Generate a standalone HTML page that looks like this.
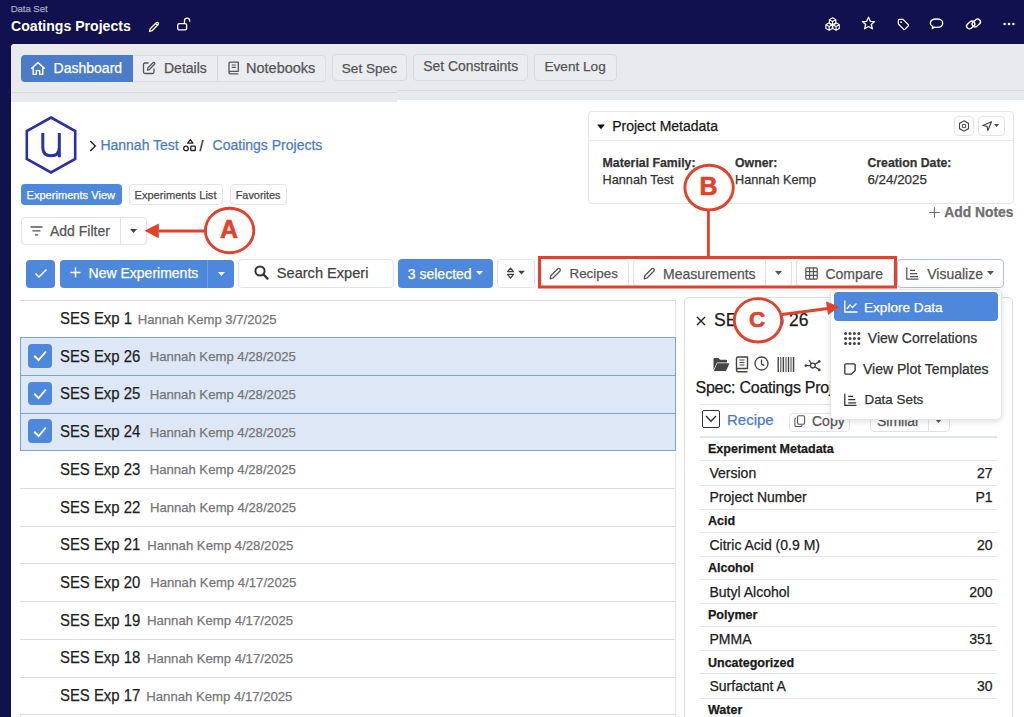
<!DOCTYPE html>
<html><head><meta charset="utf-8">
<style>
*{box-sizing:border-box;}
html,body{margin:0;padding:0;}
body{width:1024px;height:717px;overflow:hidden;position:relative;background:#11114f;font-family:"Liberation Sans",sans-serif;color:#222;-webkit-text-stroke-width:0.25px;}
.a{position:absolute;}
.t{position:absolute;white-space:nowrap;line-height:1;}
svg{position:absolute;overflow:visible;}
.btn{position:absolute;border:1px solid #e2e3e6;border-radius:4px;background:#fff;}
.gbtn{position:absolute;border:1px solid #d9dadf;border-radius:4px;background:#eaebee;}
.row{position:absolute;left:20px;width:655px;height:38px;border-top:1px solid #dcdcdc;background:#fff;}
.row.sel{background:#dee7f6;border-top:1px solid #79a3e4;}
.cb{position:absolute;left:8px;top:5.8px;width:23.6px;height:23.8px;background:#4d88dd;border-radius:4px;}
.ttl{position:absolute;left:40px;top:10.6px;font-size:16px;transform:scaleX(0.93);transform-origin:0 0;color:#1f1f1f;white-space:nowrap;line-height:1;}
.meta{position:absolute;top:12.1px;font-size:13.15px;color:#767679;white-space:nowrap;line-height:1;}
.tr{position:absolute;left:700px;width:297px;border-top:1px solid #e3e3e3;}
.th{font-weight:bold;font-size:12.5px;color:#1a1a1a;}
.td{font-size:14px;color:#222;}
</style></head><body>

<!-- HEADER -->
<div class="t" style="left:10.7px;top:4.1px;font-size:9.6px;letter-spacing:-0.05px;color:#a3a4c2;">Data Set</div>
<div class="t" style="left:11px;top:18.8px;font-size:14.1px;font-weight:bold;color:#fff;-webkit-text-stroke-width:0;">Coatings Projects</div>

<!-- main panel -->
<div class="a" style="left:11px;top:44px;width:1013px;height:673px;background:#fff;border-top-left-radius:4px;"></div>
<div class="a" style="left:11px;top:44px;width:1013px;height:56px;background:#e9eaee;border-top-left-radius:4px;"></div>
<div class="a" style="left:11px;top:44px;width:386px;height:58px;background:#e9eaee;border-top-left-radius:4px;"></div>
<div class="a" style="left:397px;top:90px;width:627px;height:1px;background:#d9dae0;"></div>
<div class="a" style="left:11px;top:92px;width:386px;height:1px;background:#d9dae0;"></div>


<!-- header icons -->
<svg style="left:148px;top:21px" width="12" height="12" viewBox="0 0 12 12"><path d="M1.5 10.5 L2.2 7.8 L8.3 1.7 Q9.2 0.9 10.1 1.8 Q10.9 2.7 10.2 3.5 L4.1 9.7 Z M7.5 2.6 L9.3 4.4" fill="none" stroke="#fff" stroke-width="1.3" stroke-linejoin="round"/></svg>
<svg style="left:177.3px;top:16.8px" width="14" height="14" viewBox="0 0 15 15"><rect x="0.8" y="7" width="9.5" height="6.8" rx="1.6" fill="none" stroke="#fff" stroke-width="1.4"/><path d="M8 7 V4.2 Q8 1.2 10.8 1.2 Q13.6 1.2 13.6 4.2 V5.2" fill="none" stroke="#fff" stroke-width="1.4"/></svg>

<svg style="left:825.3px;top:16.8px" width="15.4" height="15.4" viewBox="0 0 16 16" fill="none" stroke="#fff" stroke-width="1.15" stroke-linejoin="round"><path d="M7.90 0.80 L11.28 2.75 L11.28 6.65 L7.90 8.60 L4.52 6.65 L4.52 2.75 Z M7.90 4.70 L7.90 8.60 M7.90 4.70 L4.52 2.75 M7.90 4.70 L11.28 2.75 M4.30 6.00 L7.68 7.95 L7.68 11.85 L4.30 13.80 L0.92 11.85 L0.92 7.95 Z M4.30 9.90 L4.30 13.80 M4.30 9.90 L0.92 7.95 M4.30 9.90 L7.68 7.95 M11.50 6.00 L14.88 7.95 L14.88 11.85 L11.50 13.80 L8.12 11.85 L8.12 7.95 Z M11.50 9.90 L11.50 13.80 M11.50 9.90 L8.12 7.95 M11.50 9.90 L14.88 7.95"/></svg>
<svg style="left:861px;top:16px" width="15" height="15" viewBox="0 0 15 15"><path d="M7.5 1.3 L9.3 5.3 L13.6 5.6 L10.3 8.5 L11.4 12.8 L7.5 10.5 L3.6 12.8 L4.7 8.5 L1.4 5.6 L5.7 5.3 Z" fill="none" stroke="#fff" stroke-width="1.3" stroke-linejoin="round"/></svg>
<svg style="left:896.5px;top:17.5px" width="13" height="13" viewBox="0 0 14 14"><path d="M1.5 2.5 Q1.5 1.5 2.5 1.5 L6.5 1.5 L12.3 7.3 Q12.8 7.9 12.3 8.4 L8.4 12.3 Q7.9 12.8 7.3 12.3 L1.5 6.5 Z" fill="none" stroke="#fff" stroke-width="1.3" stroke-linejoin="round"/><circle cx="4.5" cy="4.5" r="0.9" fill="#fff"/></svg>
<svg style="left:929px;top:17px" width="15" height="14" viewBox="0 0 15 14"><path d="M3.2 11.6 L3.8 9.6 Q1.3 8.3 1.3 6.2 Q1.3 2 7.5 2 Q13.7 2 13.7 6.2 Q13.7 10.4 7.5 10.4 Q6.3 10.4 5.3 10.1 Z" fill="none" stroke="#fff" stroke-width="1.3" stroke-linejoin="round"/></svg>
<svg style="left:965px;top:16px" width="17" height="16" viewBox="0 0 17 16" fill="none" stroke="#fff" stroke-width="1.4"><rect x="1.2" y="6.2" width="9" height="5.6" rx="2.8" transform="rotate(-40 5.7 9)"/><rect x="6.8" y="4.2" width="9" height="5.6" rx="2.8" transform="rotate(-40 11.3 7)"/></svg>
<svg style="left:1002.5px;top:22px" width="12" height="4" viewBox="0 0 12 4" fill="#fff"><circle cx="1.6" cy="2" r="1.3"/><circle cx="6" cy="2" r="1.3"/><circle cx="10.4" cy="2" r="1.3"/></svg>

<!-- tabs -->
<div class="a" style="left:21px;top:55px;width:305px;height:27px;border:1px solid #dcdde1;border-radius:4px;background:#ebecef;"></div>
<div class="a" style="left:21px;top:55px;width:112px;height:27px;background:#4a7cc9;border-radius:4px 0 0 4px;"></div>
<div class="a" style="left:217px;top:55px;width:1px;height:27px;background:#d6d7dc;"></div>
<svg style="left:30px;top:61px" width="16" height="15" viewBox="0 0 16 15"><path d="M1.6 7.2 L8 1.6 L14.4 7.2 M3.2 5.9 V13.4 H6.3 V9.6 H9.7 V13.4 H12.8 V5.9" fill="none" stroke="#fff" stroke-width="1.4" stroke-linejoin="round" stroke-linecap="round"/></svg>
<div class="t" style="left:53.6px;top:61.2px;font-size:14px;color:#fff;">Dashboard</div>
<svg style="left:142px;top:61px" width="14" height="14" viewBox="0 0 14 14"><path d="M6.5 2 H3 Q1.5 2 1.5 3.5 V11 Q1.5 12.5 3 12.5 H10.5 Q12 12.5 12 11 V7.5" fill="none" stroke="#555" stroke-width="1.3"/><path d="M5.5 9 L5.8 7 L11 1.8 Q11.8 1.1 12.5 1.8 Q13.2 2.5 12.5 3.3 L7.3 8.6 Z" fill="none" stroke="#555" stroke-width="1.3" stroke-linejoin="round"/></svg>
<div class="t" style="left:164px;top:61.2px;font-size:14px;color:#555;">Details</div>
<svg style="left:227px;top:61px" width="13" height="14" viewBox="0 0 13 14"><path d="M2 11.5 V2.5 Q2 1.2 3.3 1.2 H11.3 V10.3 H3.2 Q2 10.3 2 11.5 Q2 12.8 3.2 12.8 H11.3" fill="none" stroke="#555" stroke-width="1.3" stroke-linejoin="round"/><path d="M4.8 4 H8.8 M4.8 6.3 H8.8" stroke="#555" stroke-width="1.2"/></svg>
<div class="t" style="left:246px;top:61.2px;font-size:14.5px;color:#555;">Notebooks</div>
<div class="a" style="left:331.5px;top:53.5px;width:75px;height:27px;border:1px solid #d9dadf;border-radius:4px;background:#ebecef;"></div>
<div class="t" style="left:341.8px;top:61.8px;font-size:13.6px;color:#555;">Set Spec</div>
<div class="a" style="left:413px;top:53.5px;width:115px;height:27px;border:1px solid #d9dadf;border-radius:4px;background:#ebecef;"></div>
<div class="t" style="left:423.2px;top:60px;font-size:13.9px;color:#555;">Set Constraints</div>
<div class="a" style="left:534px;top:53.5px;width:83px;height:27px;border:1px solid #d9dadf;border-radius:4px;background:#ebecef;"></div>
<div class="t" style="left:544.5px;top:60px;font-size:13.6px;color:#555;">Event Log</div>


<!-- logo & breadcrumb -->
<svg style="left:25px;top:116px" width="52" height="58" viewBox="0 0 52 58"><path d="M26 1.5 L50.2 15 L50.2 43 L26 56.5 L1.8 43 L1.8 15 Z" fill="none" stroke="#2b2fae" stroke-width="2.6" stroke-linejoin="miter"/><path d="M17.8 17 V31.5 Q17.8 39.8 26 39.8 Q34.3 39.8 34.3 31.5 V17 M34.3 31 V41.3" fill="none" stroke="#2b2fae" stroke-width="3"/></svg>
<svg style="left:89px;top:140px" width="8" height="12" viewBox="0 0 8 12"><path d="M1.3 1 L6.3 6 L1.3 11" fill="none" stroke="#222" stroke-width="1.4"/></svg>
<div class="t" style="left:100.4px;top:137.8px;font-size:14px;color:#4a7cc9;">Hannah Test</div>
<svg style="left:182px;top:138px" width="15" height="14" viewBox="0 0 15 14" fill="none" stroke="#222" stroke-width="1.3" stroke-linejoin="round"><path d="M8.3 1.5 L10.9 5.2 H5.7 Z"/><circle cx="4" cy="10.4" r="2.3"/><rect x="8.8" y="8.1" width="4.5" height="4.4" rx="0.6"/></svg>
<div class="t" style="left:199.5px;top:138.6px;font-size:14px;color:#222;">/</div>
<div class="t" style="left:212.6px;top:137.8px;font-size:14px;color:#4a7cc9;">Coatings Projects</div>

<!-- chips -->
<div class="a" style="left:21px;top:184px;width:101px;height:21px;background:#4d88dd;border-radius:4px;"></div>
<div class="t" style="left:26.5px;top:189.6px;font-size:11.1px;color:#fff;">Experiments View</div>
<div class="btn" style="left:128.5px;top:184px;width:94px;height:21px;border-color:#e4e4e4;"></div>
<div class="t" style="left:134.5px;top:189.6px;font-size:11.1px;color:#4a4a4a;">Experiments List</div>
<div class="btn" style="left:229.5px;top:184px;width:57px;height:21px;border-color:#e4e4e4;"></div>
<div class="t" style="left:235.7px;top:189.6px;font-size:10.9px;color:#4a4a4a;">Favorites</div>

<!-- add filter -->
<div class="btn" style="left:21px;top:217px;width:126px;height:28px;"></div>
<div class="a" style="left:119.5px;top:217px;width:1px;height:28px;background:#e2e3e6;"></div>
<svg style="left:30px;top:226px" width="13" height="10" viewBox="0 0 13 10"><path d="M0.5 1 H12.5 M2.5 4.8 H10.5 M4.8 8.8 H8.2" stroke="#555" stroke-width="1.3"/></svg>
<div class="t" style="left:50px;top:224.2px;font-size:14px;color:#555;">Add Filter</div>
<svg style="left:129.5px;top:229px" width="7" height="4" viewBox="0 0 7 4"><path d="M0 0 H7 L3.5 4 Z" fill="#444"/></svg>

<!-- toolbar -->
<div class="a" style="left:26px;top:259.5px;width:28.5px;height:28px;background:#4d88dd;border-radius:4px;"></div>
<svg style="left:33.5px;top:268px" width="14" height="11" viewBox="0 0 14 11"><path d="M1.5 5.5 L5 9 L12.5 1.5" fill="none" stroke="#fff" stroke-width="1.5"/></svg>
<div class="a" style="left:60px;top:259.5px;width:174px;height:28px;background:#4d88dd;border-radius:4px;"></div>
<div class="a" style="left:207px;top:259.5px;width:1px;height:28px;background:#6f9ee3;"></div>
<svg style="left:70px;top:267px" width="11" height="11" viewBox="0 0 11 11"><path d="M5.5 0.5 V10.5 M0.5 5.5 H10.5" stroke="#fff" stroke-width="1.5"/></svg>
<div class="t" style="left:88.6px;top:266.2px;font-size:14px;color:#fff;">New Experiments</div>
<svg style="left:217.5px;top:272px" width="7" height="4" viewBox="0 0 7 4"><path d="M0 0 H7 L3.5 4 Z" fill="#fff"/></svg>
<div class="btn" style="left:237.5px;top:258.5px;width:156.5px;height:29px;"></div>
<svg style="left:253.5px;top:265px" width="15" height="15" viewBox="0 0 15 15"><circle cx="6" cy="6" r="4.6" fill="none" stroke="#333" stroke-width="2"/><path d="M9.4 9.4 L13.6 13.6" stroke="#333" stroke-width="2.2" stroke-linecap="round"/></svg>
<div class="t" style="left:276.8px;top:265.9px;font-size:14.6px;color:#444;">Search Experi</div>
<div class="a" style="left:397.5px;top:259px;width:95.5px;height:28.5px;background:#4d88dd;border-radius:4px;"></div>
<div class="t" style="left:407.8px;top:266.7px;font-size:14px;color:#fff;">3 selected</div>
<svg style="left:476px;top:271px" width="7" height="4" viewBox="0 0 7 4"><path d="M0 0 H7 L3.5 4 Z" fill="#fff"/></svg>
<div class="btn" style="left:496.5px;top:259px;width:38.5px;height:28.7px;"></div>
<svg style="left:506px;top:266px" width="22" height="14" viewBox="0 0 22 14"><path d="M1.6 5.6 L4.5 2.1 L7.4 5.6 Z M1.6 8.3 L4.5 12.2 L7.4 8.3 Z" fill="none" stroke="#444" stroke-width="1.3" stroke-linejoin="round"/><path d="M12.1 4.8 H18.9 L15.5 8.5 Z" fill="#444"/></svg>

<div class="btn" style="left:540.5px;top:259px;width:88px;height:28px;"></div>
<svg style="left:549px;top:266.5px" width="13" height="13" viewBox="0 0 13 13"><path d="M1.2 11.8 L1.8 8.8 L8.8 1.8 Q9.8 0.9 10.9 2 Q11.9 3 11 4 L4 11 Z" fill="none" stroke="#555" stroke-width="1.3" stroke-linejoin="round"/></svg>
<div class="t" style="left:569.5px;top:266.5px;font-size:13.4px;color:#555;">Recipes</div>
<div class="btn" style="left:632.5px;top:259px;width:159px;height:28px;"></div>
<div class="a" style="left:765px;top:259px;width:1px;height:28px;background:#e2e3e6;"></div>
<svg style="left:643px;top:266.5px" width="13" height="13" viewBox="0 0 13 13"><path d="M1.2 11.8 L1.8 8.8 L8.8 1.8 Q9.8 0.9 10.9 2 Q11.9 3 11 4 L4 11 Z" fill="none" stroke="#555" stroke-width="1.3" stroke-linejoin="round"/></svg>
<div class="t" style="left:663px;top:266.5px;font-size:14px;color:#555;">Measurements</div>
<svg style="left:775px;top:271px" width="7" height="4" viewBox="0 0 7 4"><path d="M0 0 H7 L3.5 4 Z" fill="#555"/></svg>
<div class="btn" style="left:796px;top:259px;width:98px;height:28px;"></div>
<svg style="left:805px;top:266.5px" width="13" height="13" viewBox="0 0 13 13" fill="none" stroke="#555" stroke-width="1.2"><rect x="0.8" y="0.8" width="11.4" height="11.4" rx="1"/><path d="M0.8 4.6 H12.2 M0.8 8.4 H12.2 M4.6 0.8 V12.2 M8.4 0.8 V12.2"/></svg>
<div class="t" style="left:825.4px;top:266.5px;font-size:14px;color:#555;">Compare</div>
<div class="btn" style="left:897px;top:259px;width:106.5px;height:28.5px;border-color:#a9c3ec;"></div>
<svg style="left:906px;top:266.5px" width="13" height="13" viewBox="0 0 13 13" fill="none" stroke="#555" stroke-width="1.25"><path d="M0.8 0.5 V12.2 H12.5 M4 3.3 H9 M4 6.5 H11.3 M4 9.6 H12"/></svg>
<div class="t" style="left:927.2px;top:266.5px;font-size:14px;color:#555;">Visualize</div>
<svg style="left:987px;top:271px" width="7" height="4" viewBox="0 0 7 4"><path d="M0 0 H7 L3.5 4 Z" fill="#555"/></svg>


<!-- project metadata -->
<div class="a" style="left:588px;top:111px;width:425.5px;height:92.5px;border:1px solid #e5e5e5;border-radius:4px;background:#fff;"></div>
<div class="a" style="left:589px;top:140px;width:423.5px;height:1px;background:#ececec;"></div>
<svg style="left:596.6px;top:124.2px" width="8" height="5.2" viewBox="0 0 8 5.2"><path d="M0.6 0.4 H7.4 Q7.9 0.4 7.6 0.9 L4.4 4.8 Q4 5.2 3.6 4.8 L0.4 0.9 Q0.1 0.4 0.6 0.4 Z" fill="#111"/></svg>
<div class="t" style="left:612.2px;top:119px;font-size:14px;color:#1a1a1a;">Project Metadata</div>
<div class="btn" style="left:953.5px;top:116px;width:20px;height:20px;"></div>
<svg style="left:957.5px;top:120px" width="12" height="12" viewBox="0 0 12 12" fill="none" stroke="#444" stroke-width="1.1"><path d="M6 0.8 L10.5 3.4 V8.6 L6 11.2 L1.5 8.6 V3.4 Z"/><circle cx="6" cy="6" r="1.8"/></svg>
<div class="btn" style="left:977.5px;top:116px;width:27px;height:20px;"></div>
<svg style="left:982px;top:121px" width="18" height="10" viewBox="0 0 18 10"><path d="M0.8 4.5 L9.5 0.8 L5.8 9.5 L5 5.3 Z" fill="none" stroke="#444" stroke-width="1.2" stroke-linejoin="round"/><path d="M12 3 H17 L14.5 6 Z" fill="#444"/></svg>
<div class="t" style="left:602.6px;top:156.5px;font-size:12.3px;font-weight:bold;color:#333;">Material Family:</div>
<div class="t" style="left:735px;top:156.5px;font-size:12.3px;font-weight:bold;color:#333;">Owner:</div>
<div class="t" style="left:867.4px;top:156.5px;font-size:12.3px;font-weight:bold;color:#333;">Creation Date:</div>
<div class="t" style="left:602.6px;top:173.8px;font-size:12.7px;color:#333;">Hannah Test</div>
<div class="t" style="left:735px;top:173.8px;font-size:12.7px;color:#333;">Hannah Kemp</div>
<div class="t" style="left:867.4px;top:173.3px;font-size:13.4px;color:#333;">6/24/2025</div>
<svg style="left:929px;top:207px" width="11" height="11" viewBox="0 0 11 11"><path d="M5.5 0.3 V10.7 M0.3 5.5 H10.7" stroke="#707070" stroke-width="1.15"/></svg>
<div class="t" style="left:944.3px;top:205.9px;font-size:13.85px;font-weight:bold;color:#6e6e6e;">Add Notes</div>

<!-- list -->
<div class="a" style="left:20px;top:299px;width:1px;height:418px;background:#e6e6e6;"></div>
<div class="a" style="left:674.5px;top:299px;width:1px;height:418px;background:#e6e6e6;"></div>
<div class="row" style="top:299.5px;"><div class="ttl">SES Exp 1</div><div class="meta" style="left:117.7px">Hannah Kemp 3/7/2025</div></div>
<div class="row sel" style="top:337.2px;"><div class="cb"></div><svg style="left:13px;top:12px" width="14" height="12" viewBox="0 0 14 12"><path d="M1.2 5.7 L5.6 10 L12.9 1.5" fill="none" stroke="#fff" stroke-width="1.9"/></svg><div class="ttl">SES Exp 26</div><div class="meta" style="left:129.7px">Hannah Kemp 4/28/2025</div></div>
<div class="row sel" style="top:374.9px;"><div class="cb"></div><svg style="left:13px;top:12px" width="14" height="12" viewBox="0 0 14 12"><path d="M1.2 5.7 L5.6 10 L12.9 1.5" fill="none" stroke="#fff" stroke-width="1.9"/></svg><div class="ttl">SES Exp 25</div><div class="meta" style="left:129.7px">Hannah Kemp 4/28/2025</div></div>
<div class="row sel" style="top:412.6px;"><div class="cb"></div><svg style="left:13px;top:12px" width="14" height="12" viewBox="0 0 14 12"><path d="M1.2 5.7 L5.6 10 L12.9 1.5" fill="none" stroke="#fff" stroke-width="1.9"/></svg><div class="ttl">SES Exp 24</div><div class="meta" style="left:129.7px">Hannah Kemp 4/28/2025</div></div>
<div class="row" style="top:450.3px;border-top-color:#79a3e4;"><div class="ttl">SES Exp 23</div><div class="meta" style="left:129.7px">Hannah Kemp 4/28/2025</div></div>
<div class="row" style="top:488.0px;"><div class="ttl">SES Exp 22</div><div class="meta" style="left:129.9px">Hannah Kemp 4/28/2025</div></div>
<div class="row" style="top:525.7px;"><div class="ttl">SES Exp 21</div><div class="meta" style="left:127.2px">Hannah Kemp 4/28/2025</div></div>
<div class="row" style="top:563.4px;"><div class="ttl">SES Exp 20</div><div class="meta" style="left:130.2px">Hannah Kemp 4/17/2025</div></div>
<div class="row" style="top:601.1px;"><div class="ttl">SES Exp 19</div><div class="meta" style="left:127.0px">Hannah Kemp 4/17/2025</div></div>
<div class="row" style="top:638.8px;"><div class="ttl">SES Exp 18</div><div class="meta" style="left:127.0px">Hannah Kemp 4/17/2025</div></div>
<div class="row" style="top:676.5px;"><div class="ttl">SES Exp 17</div><div class="meta" style="left:126.3px">Hannah Kemp 4/17/2025</div></div>
<div class="a" style="left:20px;top:714.2px;width:655px;height:1px;background:#dcdcdc;"></div>
<div class="a" style="left:20px;top:337.2px;width:1px;height:113.6px;background:#79a3e4;"></div>
<div class="a" style="left:674.5px;top:337.2px;width:1px;height:113.6px;background:#79a3e4;"></div>


<!-- detail panel -->
<div class="a" style="left:684px;top:296.5px;width:329px;height:440px;border:1px solid #dedede;border-radius:5px;background:#fff;"></div>
<svg style="left:695.5px;top:316.3px" width="10" height="10" viewBox="0 0 10 10"><path d="M1 1 L9 9 M9 1 L1 9" stroke="#222" stroke-width="1.4"/></svg>
<div class="t" style="left:714px;top:311.8px;font-size:17.5px;color:#1a1a1a;">SES Exp 26</div>
<!-- icons row -->
<svg style="left:712.5px;top:356.5px" width="17" height="15" viewBox="0 0 17 15"><path d="M0.5 2 Q0.5 1 1.5 1 H5.5 L7 2.8 H13 Q14 2.8 14 3.8 V5.5 H4 L0.5 13 Z" fill="#444"/><path d="M4.2 6.3 H16.5 L13 14 H0.8 Z" fill="#444"/></svg>
<svg style="left:734.5px;top:355.5px" width="14" height="17" viewBox="0 0 14 17"><path d="M1.5 14 V2.5 Q1.5 1 3 1 H12.5 V12.5 H3 Q1.5 12.5 1.5 14 Q1.5 15.8 3 15.8 H12.5" fill="none" stroke="#444" stroke-width="1.4" stroke-linejoin="round"/><path d="M4.5 4 H9.5 M4.5 6.5 H9.5 M4.5 9 H9.5" stroke="#444" stroke-width="1.2"/></svg>
<svg style="left:753.5px;top:356px" width="15" height="15" viewBox="0 0 15 15"><circle cx="7.5" cy="7.5" r="6.5" fill="none" stroke="#444" stroke-width="1.3"/><path d="M7.5 3.5 V7.8 L10.3 9.6" fill="none" stroke="#444" stroke-width="1.3"/></svg>
<svg style="left:777px;top:356.5px" width="18" height="15" viewBox="0 0 18 15" fill="#444"><rect x="0.5" y="0" width="1.4" height="15"/><rect x="3.3" y="0" width="1" height="15"/><rect x="5.6" y="0" width="1.5" height="15"/><rect x="8.5" y="0" width="1" height="15"/><rect x="10.8" y="0" width="1.4" height="15"/><rect x="13.5" y="0" width="1" height="15"/><rect x="15.8" y="0" width="1.5" height="15"/></svg>
<svg style="left:803.5px;top:356.5px" width="17" height="15" viewBox="0 0 17 15" fill="none" stroke="#444" stroke-width="1.3"><circle cx="8.8" cy="8.6" r="2.4"/><path d="M6.4 8.6 H1.8 M10.9 7.4 L15.3 4.4 M10.9 9.8 L15.3 12.9 M7.3 6.7 L5 3"/><circle cx="1.8" cy="8.6" r="1.3" fill="#444" stroke="none"/><circle cx="15.3" cy="4.4" r="1.3" fill="#444" stroke="none"/><circle cx="15.3" cy="12.9" r="1.3" fill="#444" stroke="none"/></svg>
<div class="t" style="left:695.5px;top:379.6px;font-size:16px;letter-spacing:-0.24px;color:#1a1a1a;">Spec: Coatings Projects</div>
<div class="a" style="left:699.5px;top:404px;width:297.5px;height:1px;background:#e3e3e3;"></div>
<div class="a" style="left:701.5px;top:410px;width:18px;height:17.5px;border:1.3px solid #333;border-radius:2px;"></div>
<svg style="left:704.5px;top:415px" width="12" height="8" viewBox="0 0 12 8"><path d="M1 1 L6 6.3 L11 1" fill="none" stroke="#333" stroke-width="1.4"/></svg>
<div class="t" style="left:727px;top:412.3px;font-size:15px;color:#4a7cc9;">Recipe</div>
<div class="btn" style="left:788.5px;top:412.5px;width:61.5px;height:19px;"></div>
<svg style="left:793.8px;top:414.8px" width="11.5" height="12.5" viewBox="0 0 13 14" fill="none" stroke="#555" stroke-width="1.2"><rect x="4" y="0.8" width="8" height="9.5" rx="1.5"/><path d="M2.5 3.5 Q1 3.5 1 5 V11.5 Q1 13 2.5 13 H7.5 Q9 13 9 11.5"/></svg>
<div class="t" style="left:812px;top:414.2px;font-size:14px;color:#555;">Copy</div>
<div class="btn" style="left:869.5px;top:412.5px;width:80px;height:19px;"></div>
<div class="a" style="left:927.5px;top:412.5px;width:1px;height:19px;background:#e2e3e6;"></div>
<div class="t" style="left:877px;top:414.2px;font-size:14px;color:#555;">Similar</div>
<svg style="left:935px;top:419px" width="7" height="4" viewBox="0 0 7 4"><path d="M0 0 H7 L3.5 4 Z" fill="#555"/></svg>
<div class="a" style="left:699.5px;top:436px;width:297.5px;height:2px;background:#dfe6f1;"></div>
<div class="t th" style="left:708px;top:443.4px;">Experiment Metadata</div>
<div class="a" style="left:699.5px;top:459.7px;width:297.5px;height:1px;background:#e5e5e5;"></div>
<div class="t td" style="left:709.5px;top:465.8px;">Version</div>
<div class="t td" style="right:31.5px;top:465.8px;">27</div>
<div class="a" style="left:699.5px;top:484.7px;width:297.5px;height:1px;background:#e5e5e5;"></div>
<div class="t td" style="left:709.5px;top:490.3px;">Project Number</div>
<div class="t td" style="right:31.5px;top:490.3px;">P1</div>
<div class="a" style="left:699.5px;top:509.2px;width:297.5px;height:1px;background:#e5e5e5;"></div>
<div class="t th" style="left:708px;top:515.4px;">Acid</div>
<div class="a" style="left:699.5px;top:531.9px;width:297.5px;height:1px;background:#e5e5e5;"></div>
<div class="t td" style="left:709.5px;top:538.0px;">Citric Acid (0.9 M)</div>
<div class="t td" style="right:31.5px;top:538.0px;">20</div>
<div class="a" style="left:699.5px;top:555.7px;width:297.5px;height:1px;background:#e5e5e5;"></div>
<div class="t th" style="left:708px;top:561.9px;">Alcohol</div>
<div class="a" style="left:699.5px;top:578.6px;width:297.5px;height:1px;background:#e5e5e5;"></div>
<div class="t td" style="left:709.5px;top:584.7px;">Butyl Alcohol</div>
<div class="t td" style="right:31.5px;top:584.7px;">200</div>
<div class="a" style="left:699.5px;top:603.0px;width:297.5px;height:1px;background:#e5e5e5;"></div>
<div class="t th" style="left:708px;top:609.2px;">Polymer</div>
<div class="a" style="left:699.5px;top:625.8px;width:297.5px;height:1px;background:#e5e5e5;"></div>
<div class="t td" style="left:709.5px;top:631.9px;">PMMA</div>
<div class="t td" style="right:31.5px;top:631.9px;">351</div>
<div class="a" style="left:699.5px;top:650.3px;width:297.5px;height:1px;background:#e5e5e5;"></div>
<div class="t th" style="left:708px;top:656.5px;">Uncategorized</div>
<div class="a" style="left:699.5px;top:672.5px;width:297.5px;height:1px;background:#e5e5e5;"></div>
<div class="t td" style="left:709.5px;top:678.6px;">Surfactant A</div>
<div class="t td" style="right:31.5px;top:678.6px;">30</div>
<div class="a" style="left:699.5px;top:697.6px;width:297.5px;height:1px;background:#e5e5e5;"></div>
<div class="t th" style="left:708px;top:703.8px;">Water</div>

<!-- dropdown -->
<div class="a" style="left:830px;top:289px;width:172px;height:130.5px;background:#fff;border:1px solid #e6e6e6;border-radius:5px;box-shadow:0 2px 6px rgba(0,0,0,0.12);"></div>
<div class="a" style="left:834.3px;top:292.4px;width:163.7px;height:28.7px;background:#4d88dd;border-radius:4px;"></div>
<svg style="left:844px;top:299.5px" width="14" height="13" viewBox="0 0 14 13" fill="none" stroke="#fff" stroke-width="1.3"><path d="M0.8 0.5 V12 H13.5"/><path d="M2.8 9 L6 5 L8.5 7.5 L12.5 3.5"/></svg>
<div class="t" style="left:864px;top:300.5px;font-size:13.6px;color:#fff;">Explore Data</div>
<svg style="left:843.8px;top:331.5px" width="17" height="13" viewBox="0 0 17 13" fill="#444"><circle cx="1.6" cy="1.6" r="1.5"/><circle cx="6" cy="1.6" r="1.5"/><circle cx="10.4" cy="1.6" r="1.5"/><circle cx="14.8" cy="1.6" r="1.5"/><circle cx="1.6" cy="6.5" r="1.5"/><circle cx="6" cy="6.5" r="1.5"/><circle cx="10.4" cy="6.5" r="1.5"/><circle cx="14.8" cy="6.5" r="1.5"/><circle cx="1.6" cy="11.4" r="1.5"/><circle cx="6" cy="11.4" r="1.5"/><circle cx="10.4" cy="11.4" r="1.5"/><circle cx="14.8" cy="11.4" r="1.5"/></svg>
<div class="t" style="left:867.8px;top:331.2px;font-size:14px;color:#333;">View Correlations</div>
<svg style="left:844px;top:362.5px" width="12" height="12" viewBox="0 0 12 12" fill="none" stroke="#333" stroke-width="1.3"><path d="M2 0.8 H10 Q11.2 0.8 11.2 2 V7.5 L7.5 11.2 H2 Q0.8 11.2 0.8 10 V2 Q0.8 0.8 2 0.8 Z"/></svg>
<div class="t" style="left:863px;top:362.1px;font-size:14px;color:#333;">View Plot Templates</div>
<svg style="left:844px;top:392.5px" width="14" height="13" viewBox="0 0 14 13" fill="none" stroke="#333" stroke-width="1.25"><path d="M0.8 0.7 V12.3 H12.5 M4.2 3.4 H9 M4.2 6.7 H11.3 M4.2 9.8 H12"/></svg>
<div class="t" style="left:864.5px;top:393px;font-size:13.4px;color:#333;">Data Sets</div>

<!-- annotations -->
<svg style="left:0;top:0" width="1024" height="717" viewBox="0 0 1024 717">
 <g fill="#fff" stroke="#e2412b">
  <ellipse cx="229.6" cy="230.5" rx="24.2" ry="22.3" stroke-width="2.9"/>
  <path d="M158.5 231 H205" stroke-width="3" fill="none"/>
  <ellipse cx="709.1" cy="187.6" rx="24.2" ry="22.3" stroke-width="2.9"/>
  <path d="M708.4 210 V257" stroke-width="2.8" fill="none"/>
  <rect x="539.5" y="257.5" width="356" height="29.5" stroke-width="3" fill="none"/>
  <ellipse cx="758" cy="320.3" rx="23.7" ry="21.7" stroke-width="2.9"/>
  <path d="M782 314.5 L828 308.5" stroke-width="3" fill="none"/>
 </g>
 <path d="M144.5 230.8 L158.8 223.4 L158.8 238.2 Z" fill="#e2412b"/>
 <path d="M839.5 306.7 L826 301.5 L828 315 Z" fill="#e2412b"/>
 <g fill="#e2412b" stroke="#e2412b" stroke-width="0.6" font-family="Liberation Sans" font-weight="bold" font-size="25" text-anchor="middle">
  <text x="229" y="238.2">A</text>
  <text x="708.6" y="195">B</text>
  <text x="757" y="326.6" font-size="22.5">C</text>
 </g>
</svg>

</body></html>
